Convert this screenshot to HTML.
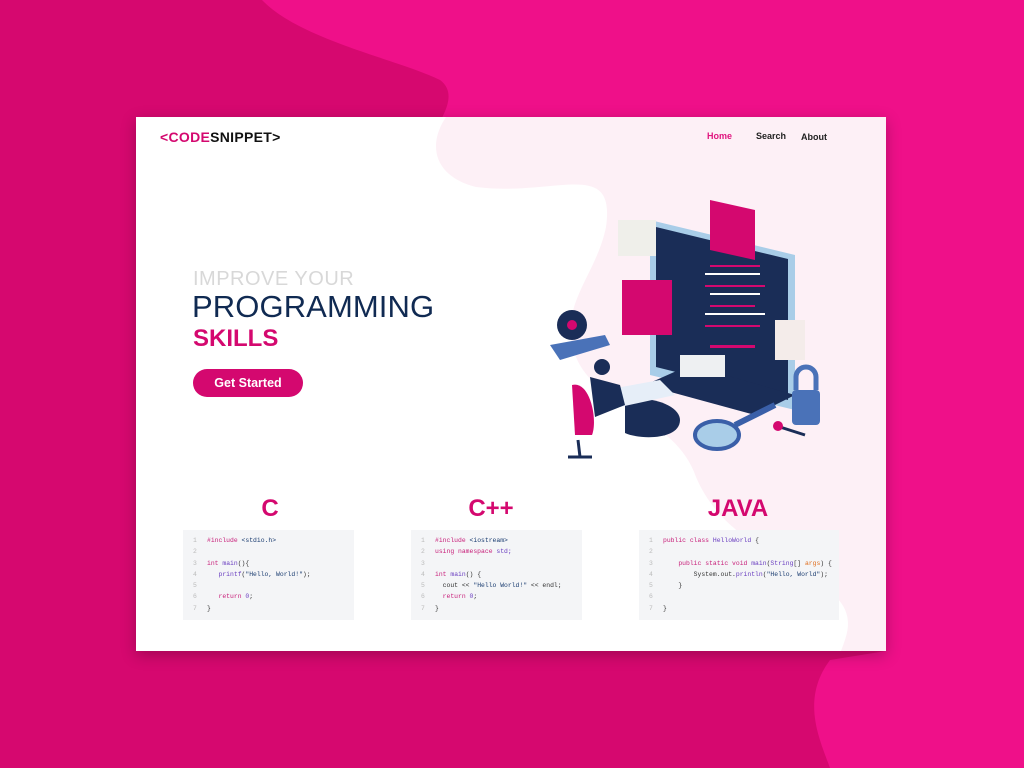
<!DOCTYPE html>
<html><head><meta charset="utf-8"><style>
*{margin:0;padding:0;box-sizing:border-box}
body{width:1024px;height:768px;overflow:hidden;position:relative;background:#d6086f;font-family:"Liberation Sans",sans-serif}
.bg{position:absolute;left:0;top:0}
.card{position:absolute;left:136px;top:117px;width:750px;height:534px;background:#fff;box-shadow:0 4px 14px rgba(0,0,0,.25);overflow:hidden}
.logo{position:absolute;left:24px;top:12px;font-weight:bold;font-size:14px;letter-spacing:.3px}
.nav{position:absolute;top:14px;font-size:9px;font-weight:bold;color:#222}
.h1{position:absolute;left:57px;top:151px;font-size:20px;color:#d8d8d8;letter-spacing:.5px}
.h2{position:absolute;left:56px;top:172px;font-size:31px;color:#102a52;letter-spacing:.1px}
.h3{position:absolute;left:57px;top:208px;font-size:24px;color:#d4086f;font-weight:bold}
.btn{position:absolute;left:57px;top:252px;width:110px;height:28px;border-radius:14px;background:#d4086f;color:#fff;font-size:12.5px;font-weight:bold;text-align:center;line-height:28px}
.lang{position:absolute;top:378px;font-size:24px;font-weight:bold;color:#d4086f;text-align:center;width:170px}
.code{position:absolute;top:413px;width:171px;height:90px;background:#f4f5f7;font-family:"Liberation Mono",monospace;font-size:6.4px;color:#333;padding:5px 0 0 10px;line-height:11.3px;white-space:pre}
.n{color:#bbb;display:inline-block;width:14px}
.k{color:#c8207a}.f{color:#6a3fc0}.s{color:#1a3c70}.o{color:#e07020}
</style></head><body>
<svg class="bg" width="1024" height="768">
<path d="M262 0 C300 40 400 60 440 80 C460 95 440 120 430 140 L886 117 L886 651 L830 660 C800 700 820 740 830 768 L1024 768 L1024 0 Z" fill="#ef1089"/>
</svg>
<div class="card">
<svg width="750" height="534" style="position:absolute;left:0;top:0">
<path d="M310 0 C290 30 300 60 340 70 C420 80 480 40 470 110 C460 160 420 190 440 240 C460 290 540 300 560 360 C590 430 660 440 700 480 C720 500 710 520 705 534 L750 534 L750 0 Z" fill="#fdf0f6"/>
<g transform="translate(394,78)">
<path d="M120 25 L265 60 L265 215 L120 180 Z" fill="#a9cde8"/>
<path d="M126 32 L258 64 L258 205 L126 172 Z" fill="#1a2d57"/>
<g fill="#d4086f"><rect x="180" y="70" width="50" height="2"/><rect x="175" y="90" width="60" height="2"/><rect x="180" y="110" width="45" height="2"/><rect x="175" y="130" width="55" height="2"/><rect x="180" y="150" width="45" height="3"/></g>
<g fill="#fff"><rect x="175" y="78" width="55" height="2"/><rect x="180" y="98" width="50" height="2"/><rect x="175" y="118" width="60" height="2"/></g>
<path d="M115 190 L225 220 L265 200 L160 170 Z" fill="#1a2d57"/>
<rect x="150" y="160" width="45" height="22" fill="#eef0f2"/>
<path d="M180 5 L225 15 L225 65 L180 55 Z" fill="#d4086f"/>
<rect x="88" y="25" width="38" height="36" fill="#efefea"/>
<rect x="92" y="85" width="50" height="55" fill="#d4086f"/>
<rect x="245" y="125" width="30" height="40" fill="#f4ecea"/>
<circle cx="42" cy="130" r="15" fill="#1a2d57"/><circle cx="42" cy="130" r="5" fill="#d4086f"/>
<path d="M20 150 L75 140 L80 150 L30 165 Z" fill="#4a72b8"/>
<path d="M95 205 C125 200 150 212 150 225 C150 245 110 245 95 238 Z" fill="#1a2d57"/>
<path d="M75 195 L130 185 L145 200 L90 212 Z" fill="#e6eef8"/>
<path d="M42 190 C60 185 68 225 62 240 L45 240 Z" fill="#d4086f"/>
<path d="M48 245 L50 262 M38 262 L62 262" stroke="#1a2d57" stroke-width="3"/>
<circle cx="72" cy="172" r="8" fill="#1a2d57"/>
<path d="M60 182 L90 190 L95 210 L65 222 Z" fill="#1a2d57"/>
<ellipse cx="187" cy="240" rx="22" ry="14" fill="#a9cde8" stroke="#3a5fa8" stroke-width="4"/>
<path d="M205 230 L245 210" stroke="#3a5fa8" stroke-width="6"/>
<rect x="262" y="195" width="28" height="35" rx="4" fill="#4a72b8"/>
<path d="M266 195 V182 a10 10 0 0 1 20 0 V195" stroke="#4a72b8" stroke-width="5" fill="none"/>
<path d="M250 232 L275 240" stroke="#1a2d57" stroke-width="3"/><circle cx="248" cy="231" r="5" fill="#d4086f"/>
</g>
</svg>
<div class="logo"><span style="color:#d4086f">&lt;CODE</span><span style="color:#111">SNIPPET&gt;</span></div>
<div class="nav" style="left:571px;color:#e0157f">Home</div>
<div class="nav" style="left:620px">Search</div>
<div class="nav" style="left:665px;top:15px">About</div>
<div class="h1">IMPROVE YOUR</div>
<div class="h2">PROGRAMMING</div>
<div class="h3">SKILLS</div>
<div class="btn">Get Started</div>
<div class="lang" style="left:49px">C</div>
<div class="lang" style="left:270px">C++</div>
<div class="lang" style="left:517px">JAVA</div>
<div class="code" style="left:47px"><span class="n">1</span><span class="k">#include</span> <span class="s">&lt;stdio.h&gt;</span>
<span class="n">2</span>
<span class="n">3</span><span class="k">int</span> <span class="f">main</span>(){
<span class="n">4</span>   <span class="f">printf</span>(<span class="s">"Hello, World!"</span>);
<span class="n">5</span>
<span class="n">6</span>   <span class="k">return</span> <span class="f">0</span>;
<span class="n">7</span>}</div>
<div class="code" style="left:275px"><span class="n">1</span><span class="k">#include</span> <span class="s">&lt;iostream&gt;</span>
<span class="n">2</span><span class="k">using namespace</span> <span class="f">std;</span>
<span class="n">3</span>
<span class="n">4</span><span class="k">int</span> <span class="f">main</span>() {
<span class="n">5</span>  cout &lt;&lt; <span class="s">"Hello World!"</span> &lt;&lt; endl;
<span class="n">6</span>  <span class="k">return</span> <span class="f">0</span>;
<span class="n">7</span>}</div>
<div class="code" style="left:503px;width:200px"><span class="n">1</span><span class="k">public class</span> <span class="f">HelloWorld</span> {
<span class="n">2</span>
<span class="n">3</span>    <span class="k">public static void</span> <span class="f">main</span>(<span class="f">String</span>[] <span class="o">args</span>) {
<span class="n">4</span>        System.out.<span class="f">println</span>(<span class="s">"Hello, World"</span>);
<span class="n">5</span>    }
<span class="n">6</span>
<span class="n">7</span>}</div>
</div>
</body></html>
